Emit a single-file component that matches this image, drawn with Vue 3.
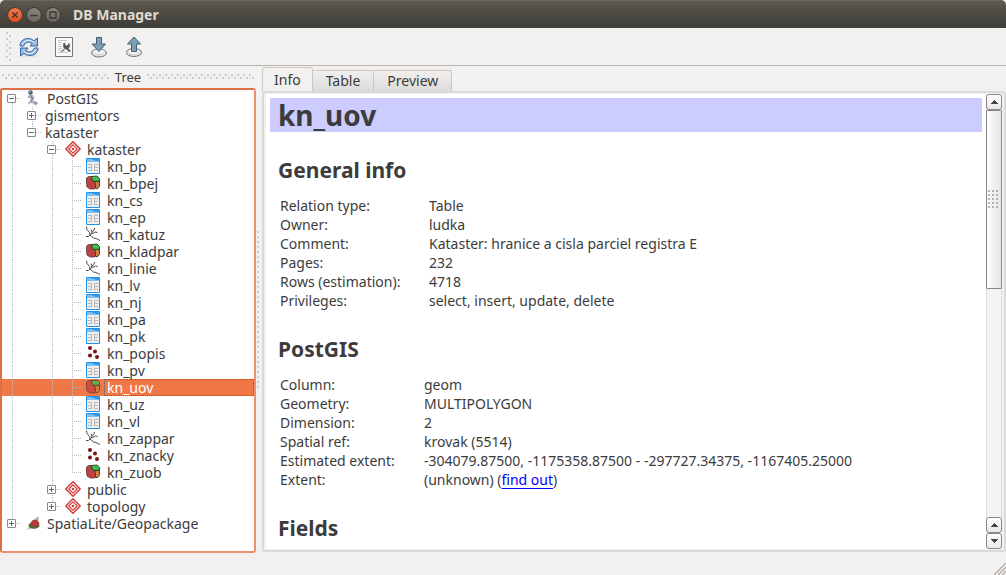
<script setup>
import { ref } from 'vue'

const row = (depth, label, icon = '', expander = '', lines = [], end = '') => ({ depth, label, icon, expander, lines, end })
const layers = [
  ['kn_bp', 'table'], ['kn_bpej', 'polygon'], ['kn_cs', 'table'], ['kn_ep', 'table'],
  ['kn_katuz', 'line'], ['kn_kladpar', 'polygon'], ['kn_linie', 'line'], ['kn_lv', 'table'],
  ['kn_nj', 'table'], ['kn_pa', 'table'], ['kn_pk', 'table'], ['kn_popis', 'point'],
  ['kn_pv', 'table'], ['kn_uov', 'polygon'], ['kn_uz', 'table'], ['kn_vl', 'table'],
  ['kn_zappar', 'line'], ['kn_znacky', 'point'], ['kn_zuob', 'polygon'],
]
const rows = [
  row(0, 'PostGIS', 'postgis', 'minus', [], 'first'),
  row(1, 'gismentors', '', 'plus', [true]),
  row(1, 'kataster', '', 'minus', [true], 'last'),
  row(2, 'kataster', 'schema', 'minus', [true, false]),
  ...layers.map(([name, icon], i) => row(3, name, icon, '', [true, false, true], i === layers.length - 1 ? 'last' : '')),
  row(2, 'public', 'schema', 'plus', [true, false]),
  row(2, 'topology', 'schema', 'plus', [true, false], 'last'),
  row(0, 'SpatiaLite/Geopackage', 'spatialite', 'plus', [], 'last'),
]
const selected = ref('kn_uov')

const tabs = ['Info', 'Table', 'Preview']
const activeTab = ref('Info')

const general = [
  ['Relation type:', 'Table'],
  ['Owner:', 'ludka'],
  ['Comment:', 'Kataster: hranice a cisla parciel registra E'],
  ['Pages:', '232'],
  ['Rows (estimation):', '4718'],
  ['Privileges:', 'select, insert, update, delete'],
]
const postgis = [
  ['Column:', 'geom'],
  ['Geometry:', 'MULTIPOLYGON'],
  ['Dimension:', '2'],
  ['Spatial ref:', 'krovak (5514)'],
  ['Estimated extent:', '-304079.87500, -1175358.87500 - -297727.34375, -1167405.25000'],
]
</script>

<template>
  <div class="window">
    <header class="titlebar">
      <button class="wbtn close" aria-label="Close">
        <svg viewBox="0 0 16 16"><path d="M5.2 5.2l5.6 5.6M10.8 5.2l-5.6 5.6" /></svg>
      </button>
      <button class="wbtn" aria-label="Minimize">
        <svg viewBox="0 0 16 16"><path d="M4.5 8.500h7" /></svg>
      </button>
      <button class="wbtn" aria-label="Maximize">
        <svg viewBox="0 0 16 16"><path d="M5 5h6v6H5z" /></svg>
      </button>
      <h1 class="title">DB Manager</h1>
    </header>

    <div class="toolbar">
      <span class="handle"></span>
      <button class="tool" aria-label="Refresh">
        <svg viewBox="0 0 22 22">
          <ellipse cx="11" cy="19.5" rx="9" ry="1.5" fill="#ddd" />
          <path d="M2 10C2 4.500 7 2 11.500 2.600Q14 3 16 4.800L19.500 2V10H12L14.200 7.200Q8.500 4 5.500 10z" fill="#9dbce3" stroke="#3465a4" />
          <path d="M20 12C20 17.500 15 20 10.500 19.400Q8 19 6 17.200L2.500 20V12H10L7.800 14.800Q13.500 18 16.500 12z" fill="#9dbce3" stroke="#3465a4" />
          <path d="M4 8.500Q6.500 4 11 4.200Q14 4.500 16.200 6.500M18 13.500Q15.500 18 11 17.800Q8 17.500 5.800 15.500" fill="none" stroke="#e4eefa" />
        </svg>
      </button>
      <button class="tool" aria-label="SQL Window">
        <svg viewBox="0 0 22 22">
          <path d="M2.500 1.500h17v19h-17z" fill="#f9f9f9" stroke="#777" />
          <path d="M5 4.500h9M5 6.500h4M5 8.500h3M5 10.500h4M5 12.500h4M5 14.500h3M5 16.500h10" stroke="#c8c8c8" />
          <path d="M10 7.500L12.300 6.800V9l1.700.6 1.500-1.300-.5-1.500Q17 7.500 17 9.800Q16.800 11.500 15.500 12.200L17.800 15l-1.500 1.300L13.500 13.600 11.500 13Q9.800 11 10 7.500z" fill="#55595a" />
          <path d="M7.500 15.500l3-2.700 1.500 1.500-2.500 1.500z" fill="#808486" />
        </svg>
      </button>
      <button class="tool" aria-label="Import layer or file">
        <svg viewBox="0 0 22 22">
          <ellipse cx="11" cy="17" rx="7.500" ry="4" fill="#ddd" stroke="#777" />
          <ellipse cx="11" cy="15.500" rx="5.500" ry="2" fill="#f8f8f8" />
          <path d="M8.500 1.500h5v6.500h4L11 15.500 4 8h4.500z" fill="#7d9fb5" stroke="#43606f" />
        </svg>
      </button>
      <button class="tool" aria-label="Export to file">
        <svg viewBox="0 0 22 22">
          <ellipse cx="11" cy="16.500" rx="7.500" ry="4" fill="#ddd" stroke="#777" />
          <ellipse cx="11" cy="15.500" rx="5.500" ry="2.200" fill="#f8f8f8" />
          <path d="M8.500 15.500h5V8h4L11 1 4.500 8h4z" fill="#7d9fb5" stroke="#43606f" />
        </svg>
      </button>
    </div>

    <main class="body">
      <aside class="dock">
        <div class="docktitle"><i class="dots"></i><span>Tree</span><i class="dots"></i></div>
        <ul class="tree" role="tree">
          <li
            v-for="(r, i) in rows"
            :key="i"
            class="row"
            :class="{ selected: r.label === selected }"
            role="treeitem"
            :aria-level="r.depth + 1"
            :aria-selected="r.label === selected"
            @click="selected = r.label"
          >
            <span v-for="(on, j) in r.lines" :key="j" class="cell"><i v-if="on" class="v"></i></span>
            <span class="cell">
              <i class="v" :class="r.end"></i>
              <i class="h"></i>
              <i v-if="r.expander" class="exp" :class="r.expander"></i>
            </span>
            <svg v-if="r.icon === 'table'" class="icon" viewBox="0 0 16 16">
              <path d="M1.500 .5h13v15h-13z" fill="#efefef" stroke="#2092ea" />
              <path d="M2 1h12v3H2z" fill="#7cc0f6" /><path d="M7 1h7v1H7zM10 2h4v1h-4z" fill="#2f9bee" />
              <path d="M3 6.500h4M9 6.500h4M3 9.500h4M9 9.500h4M3 12.500h4M9 12.500h4M6.500 6v7M9.500 6v7" stroke="#b8b8b8" />
            </svg>
            <svg v-else-if="r.icon === 'polygon'" class="icon" viewBox="0 0 16 16">
              <path d="M1.500 3L3.500 1.500H7L8 6l2.500 1.500V11l1.500 1.500L9.500 14H5L2 12l-.5-4z" fill="#c24040" stroke="#3b302b" stroke-width=".7" />
              <path d="M9.500 6.500l5-.5v5.500L12 14l-1.500-1.500V9.500z" fill="#cc7f42" stroke="#3b302b" stroke-width=".9" />
              <path d="M6.500 1.500L12 1l2.500 2.500V6L9 6.500 7 5z" fill="#3dc04e" stroke="#213a20" stroke-width=".9" />
            </svg>
            <svg v-else-if="r.icon === 'line'" class="icon" viewBox="0 0 16 16">
              <path d="M1.500 .5l.5 3 2.500 3L5 9l-1.500 1.500H1M5 9l3.500 3 2.500.5 4 2M5.500 9L7 6l2-1.500L9.500 2M7 6L6 3.500M6.500 7.500l2.500-.5 1.500-1 2 .5" fill="none" stroke="#3a3a3a" stroke-width=".9" />
            </svg>
            <svg v-else-if="r.icon === 'point'" class="icon" viewBox="0 0 16 16" fill="#7c1015">
              <circle cx="5" cy="3" r="2" /><circle cx="10" cy="6.500" r="2" /><circle cx="5" cy="10.500" r="2" /><circle cx="12" cy="12" r="2" />
            </svg>
            <svg v-else-if="r.icon === 'schema'" class="icon" viewBox="0 0 16 16">
              <path d="M8 .8L15.200 8 8 15.200.8 8z" fill="#fff" stroke="#d33b3b" stroke-width="1.500" stroke-linejoin="round" />
              <path d="M8 3.800L12.200 8 8 12.200 3.800 8z" fill="#fff" stroke="#d33b3b" stroke-width="1.200" />
              <circle cx="8" cy="8" r="1.300" fill="#d33b3b" />
            </svg>
            <svg v-else-if="r.icon === 'postgis'" class="icon" viewBox="0 0 16 16">
              <path d="M4 4.500l4 .5 1.500 2.500-1 3.500 4 1 .5 2-2.500 1.500-3.500-2.500-2 .5-2 1.500.5-3 2-1.500-.5-2.500-2-1z" fill="#b3b6c2" />
              <path d="M6 5.500l1.500 3-1.500 3M9 12l2.500 1.500M3 7l1.500.5" fill="none" stroke="#6e7282" />
              <circle cx="5.500" cy="2.500" r="2.300" fill="#42636d" /><circle cx="5" cy="2" r="1" fill="#83a7ad" />
            </svg>
            <svg v-else-if="r.icon === 'spatialite'" class="icon" viewBox="0 0 16 16">
              <path d="M1 15l3-2.500L8 5l6-4-.5 5L8 13z" fill="#b4b7bb" />
              <ellipse cx="9" cy="10.500" rx="5.500" ry="3.200" fill="#38752f" />
              <path d="M4.500 9.500l2.500-4 4.500-1 3 3.500-1 3-6 1z" fill="#b53c3c" />
            </svg>
            <span class="label">{{ r.label }}</span>
          </li>
        </ul>
      </aside>

      <div class="splitter"><i></i></div>

      <section class="pane">
        <nav class="tabs" role="tablist">
          <button v-for="t in tabs" :key="t" role="tab" class="tab" :class="{ active: t === activeTab }" :aria-selected="t === activeTab" @click="activeTab = t">{{ t }}</button>
        </nav>
        <div class="frame">
          <article class="doc">
            <h1>kn_uov</h1>
            <h2>General info</h2>
            <table>
              <tbody>
                <tr v-for="g in general" :key="g[0]"><th scope="row" class="wide">{{ g[0] }}</th><td>{{ g[1] }}</td></tr>
              </tbody>
            </table>
            <h2>PostGIS</h2>
            <table>
              <tbody>
                <tr v-for="g in postgis" :key="g[0]"><th scope="row">{{ g[0] }}</th><td>{{ g[1] }}</td></tr>
                <tr><th scope="row">Extent:</th><td>(unknown) (<a href="#extent">find out</a>)</td></tr>
              </tbody>
            </table>
            <h2>Fields</h2>
          </article>
          <div class="scroll">
            <button class="sbtn" aria-label="Scroll up"><svg viewBox="0 0 7 4"><path d="M0 4h7v-1h-1v-1h-1v-1h-1v-1h-1v1h-1v1h-1v1h-1z" /></svg></button>
            <div class="track">
              <div class="thumb"><i></i></div>
            </div>
            <button class="sbtn" aria-label="Scroll up one page"><svg viewBox="0 0 7 4"><path d="M0 4h7v-1h-1v-1h-1v-1h-1v-1h-1v1h-1v1h-1v1h-1z" /></svg></button>
            <button class="sbtn" aria-label="Scroll down"><svg viewBox="0 0 7 4"><path d="M0 0h7v1h-1v1h-1v1h-1v1h-1v-1h-1v-1h-1v-1h-1z" /></svg></button>
          </div>
        </div>
      </section>
    </main>

    <footer class="status">
      <svg viewBox="0 0 12 12"><path d="M0 12L12 0M4 12l8-8M8 12l4-4" fill="none" stroke="#b5b2ae" stroke-width="1.500" /></svg>
    </footer>
  </div>
</template>

<style>
html, body { margin: 0; overflow: hidden; }
</style>

<style scoped>
* { box-sizing: border-box; }
button { margin: 0; padding: 0; border: 0; background: none; font: inherit; color: inherit; }
svg { display: block; }
.window { height: 100vh; display: flex; flex-direction: column; background: #f2f1f0; color: #3c3c3c; font: 14px/17px "Noto Sans", "Open Sans", sans-serif; }

.titlebar { flex: none; height: 28px; display: flex; align-items: center; gap: 3px; padding-left: 7px; background: linear-gradient(#5b5850, #3d3c37); border-top: 1px solid #69665c; border-radius: 5px 5px 0 0; }
.wbtn { width: 16px; height: 16px; border-radius: 50%; background: linear-gradient(#8b877d, #67645c); box-shadow: 0 0 0 1px #373631 inset; }
.wbtn svg { fill: none; stroke: #3a3934; stroke-width: 1.3; }
.wbtn.close { background: linear-gradient(#f57c50, #e04f1e); }
.title { margin: 0 0 0 9px; font-size: 14px; line-height: 20px; font-weight: 700; color: #dfdbd2; }

.toolbar { flex: none; height: 38px; display: flex; align-items: center; border-bottom: 1px solid #b9b6b3; background: #f2f1f0; padding-left: 6px; }
.handle { width: 6px; height: 30px; margin-right: 6px; background: radial-gradient(circle at 1px 1px, #cfccca 1px, transparent 1px) 0 0 / 6px 6px, radial-gradient(circle at 1px 1px, #cfccca 1px, transparent 1px) 3px 3px / 6px 6px; }
.tool { width: 22px; height: 22px; margin-right: 13px; }

.body { flex: 1; min-height: 0; display: flex; }
.dock { flex: none; width: 256px; display: flex; flex-direction: column; }
.docktitle { flex: none; height: 22px; display: flex; align-items: center; gap: 6px; padding: 0 2px; font-size: 13px; }
.dots { flex: 1; height: 6px; background: radial-gradient(circle at 1px 1px, #cfccca 1px, transparent 1px) 0 0 / 6px 6px, radial-gradient(circle at 1px 1px, #cfccca 1px, transparent 1px) 3px 3px / 6px 6px; }
.tree { flex: 1; min-height: 0; overflow: hidden; margin: 0; padding: 0; list-style: none; background: #fff; border: 2px solid #ef8f6d; border-top-color: #df6f48; border-left-color: #df6f48; border-radius: 3px; }
.row { display: flex; height: 17px; align-items: center; }
.cell { flex: none; position: relative; width: 20px; height: 17px; }
.v, .h, .exp { position: absolute; }
.v { left: 10px; top: 0; width: 1px; height: 17px; background: repeating-linear-gradient(#bdbdbd 0 1px, transparent 1px 2px); }
.v.last { height: 9px; }
.v.first { top: 9px; height: 8px; }
.h { left: 10px; top: 8px; width: 10px; height: 1px; background: repeating-linear-gradient(90deg, #bdbdbd 0 1px, transparent 1px 2px); }
.exp { left: 5px; top: 4px; width: 9px; height: 9px; border: 1px solid #888; border-radius: 1px; background: linear-gradient(#666, #666) center / 5px 1px no-repeat #fff; }
.exp.plus { background: linear-gradient(#666, #666) center / 5px 1px no-repeat, linear-gradient(#666, #666) center / 1px 5px no-repeat #fff; }
.icon { flex: none; width: 16px; height: 16px; margin: 0 3px 1px; }
.label { flex: 1; height: 17px; padding-left: 3px; white-space: nowrap; line-height: 17px; }
.selected { background: #f07746; color: #fff; }
.selected .icon { opacity: .75; }
.selected .label { outline: 1px dotted #2f6f94; outline-offset: -1px; }

.splitter { flex: none; width: 6px; display: flex; align-items: center; justify-content: center; }
.splitter i { width: 4px; height: 158px; background: radial-gradient(circle at 1px 1px, #cfccca 1px, transparent 1px) 0 0 / 4px 5px; }

.pane { flex: 1; min-width: 0; display: flex; flex-direction: column; padding: 1px 0; }
.tabs { flex: none; height: 24px; display: flex; align-items: flex-end; }
.tab { height: 21px; padding: 0 13px 1px; border: 1px solid #cbc8c5; border-left: 0; border-bottom: 0; background: linear-gradient(#f1f0ef, #dddbd9); }
.tab:last-child { border-radius: 0 3px 0 0; }
.tab.active { height: 24px; padding: 0 11px 1px; border-left: 1px solid #cbc8c5; border-radius: 3px 3px 0 0; background: #f2f1f0; }
.frame { flex: 1; min-height: 0; display: flex; border: 2px solid #dcdad8; border-radius: 3px; padding: 1px 2px; background: #f2f1f0; }
.doc { flex: 1; min-width: 0; overflow: hidden; padding: 4px 4px 0; background: #fff; }
.doc h1 { margin: 0; padding-left: 8px; height: 34px; line-height: 34px; font-size: 28px; background: #ccccff; }
.doc h2 { margin: 26px 8px 13px; font-size: 21px; line-height: 26px; }
.doc h1 + h2 { margin-top: 25px; }
.doc table { margin-left: 10px; border-collapse: collapse; }
.doc th, .doc td { padding: 0; height: 19px; line-height: 19px; font-weight: 400; text-align: left; white-space: nowrap; }
.doc th { width: 144px; }
.doc th.wide { width: 149px; }
.doc a { color: #00f; text-underline-offset: 3px; }

.scroll { flex: none; width: 16px; display: flex; flex-direction: column; }
.sbtn { flex: none; height: 16px; border: 1px solid #8b8988; border-radius: 3px; background: linear-gradient(#fff, #e9e8e7); display: flex; align-items: center; justify-content: center; }
.sbtn svg { width: 7px; height: 4px; fill: #444; }
.track { flex: 1; min-height: 0; border: dotted #c5c3c1; border-width: 0 1px; background: #f3f3f3; }
.thumb { height: 44%; margin: 0 -1px; border: 1px solid #8b8988; border-radius: 1px; background: linear-gradient(90deg, #fdfdfd, #e6e5e3); display: flex; align-items: center; justify-content: center; }
.thumb i { width: 12px; height: 20px; background: radial-gradient(circle at 1px 1px, #b5b3b1 1px, transparent 1px) 0 0 / 4px 4px; }

.status { flex: none; height: 22px; display: flex; justify-content: flex-end; align-items: flex-end; }
.status svg { width: 12px; height: 12px; }
</style>
